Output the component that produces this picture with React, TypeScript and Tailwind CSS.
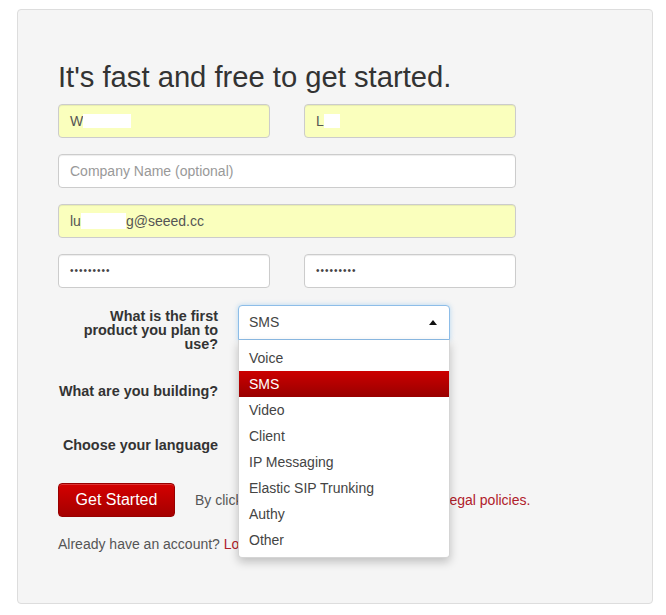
import { useState } from 'react'

const products = ['Voice', 'SMS', 'Video', 'Client', 'IP Messaging', 'Elastic SIP Trunking', 'Authy', 'Other']

const inputBase =
  'h-[34px] rounded-[4px] border border-[#ccc] px-[11px] text-[14px] text-[#555] flex items-center shadow-[inset_0_1px_1px_rgba(0,0,0,0.075)]'

function Password() {
  return (
    <div className={`${inputBase} w-[212px] bg-white`}>
      <span className="text-[10px] tracking-[1px] text-[#444] leading-none">•••••••••</span>
    </div>
  )
}

function FieldLabel({ children, className = '' }: { children: React.ReactNode; className?: string }) {
  return (
    <div className={`w-[160px] shrink-0 text-right text-[14.4px] font-bold leading-[14px] text-[#333] ${className}`}>
      {children}
    </div>
  )
}

export default function App() {
  const [selected] = useState('SMS')

  return (
    <div className="min-h-[615px] w-full bg-white pt-[9px] pl-[17px] font-['Liberation_Sans',Arial,sans-serif]">
      <div className="w-[636px] h-[595px] rounded-[4px] border border-[#ddd] bg-[#f5f5f5] px-[40px] pt-[51px]">
        <h1 className="text-[29.2px] leading-[32px] text-[#333] mb-[11px]">It's fast and free to get started.</h1>

        <div className="flex flex-col gap-[16px] w-[458px]">
          <div className="flex justify-between">
            <div className={`${inputBase} w-[212px] bg-[#faffbd] text-[#333]`}>
              W<span className="inline-block w-[48px] h-[14px] bg-white"></span>
            </div>
            <div className={`${inputBase} w-[212px] bg-[#faffbd] text-[#333]`}>
              L<span className="inline-block w-[16px] h-[14px] bg-white"></span>
            </div>
          </div>
          <div className={`${inputBase} w-full bg-white text-[#999]`}>Company Name (optional)</div>
          <div className={`${inputBase} w-full bg-[#faffbd] text-[#333]`}>
            lu<span className="inline-block w-[45px] h-[16px] bg-white"></span>g@seeed.cc
          </div>
          <div className="flex justify-between">
            <Password />
            <Password />
          </div>
        </div>

        {/* product question with open dropdown */}
        <div className="flex mt-[17px] gap-[20px] h-[46px]">
          <FieldLabel className="pt-[4px]">
            What is the first product you plan to use?
          </FieldLabel>
          <div className="relative z-10 w-[212px]">
            <div className="h-[35px] rounded-t-[4px] border border-[#8dbde8] bg-white pl-[10px] pr-[12px] flex items-center justify-between text-[14px] text-[#444] shadow-[0_0_5px_rgba(102,175,233,0.45)]">
              <span>{selected}</span>
              <svg width="8" height="5" viewBox="0 0 8 5">
                <path d="M0 5 L4 0 L8 5 Z" fill="#111" />
              </svg>
            </div>
            <ul className="absolute left-0 top-[35px] w-[212px] bg-white border border-[#d5d5d5] border-t-0 rounded-b-[4px] pt-[5px] pb-[4px] shadow-[0_4px_10px_rgba(0,0,0,0.22)]">
              {products.map((p) => (
                <li
                  key={p}
                  className={
                    p === selected
                      ? 'h-[26px] pl-[10px] flex items-center text-[14px] text-white bg-gradient-to-b from-[#cc0000] to-[#990000]'
                      : 'h-[26px] pl-[10px] flex items-center text-[14px] text-[#444]'
                  }
                >
                  {p}
                </li>
              ))}
            </ul>
          </div>
        </div>

        <div className="flex items-center mt-[23px] gap-[20px] h-[34px]">
          <FieldLabel>What are you building?</FieldLabel>
          <div className={`${inputBase} w-[212px] bg-white`}></div>
        </div>

        <div className="flex items-center mt-[20px] gap-[20px] h-[34px]">
          <FieldLabel>Choose your language</FieldLabel>
          <div className={`${inputBase} w-[212px] bg-white`}></div>
        </div>

        <div className="flex items-center mt-[21px] gap-[20px]">
          <button className="h-[34px] w-[117px] rounded-[4px] border border-[#980000] bg-gradient-to-b from-[#d40000] to-[#a50000] text-[16px] text-white shadow-[inset_0_1px_0_rgba(255,255,255,0.2)]">
            Get Started
          </button>
          <p className="text-[14px] text-[#555]">
            By clicking Get Started you agree to our <span className="text-[#b0202a]">legal policies.</span>
          </p>
        </div>

        <p className="mt-[17px] text-[14px] leading-[20px] text-[#555]">
          Already have an account? <span className="text-[#b0202a]">Log in</span>
        </p>
      </div>
    </div>
  )
}
